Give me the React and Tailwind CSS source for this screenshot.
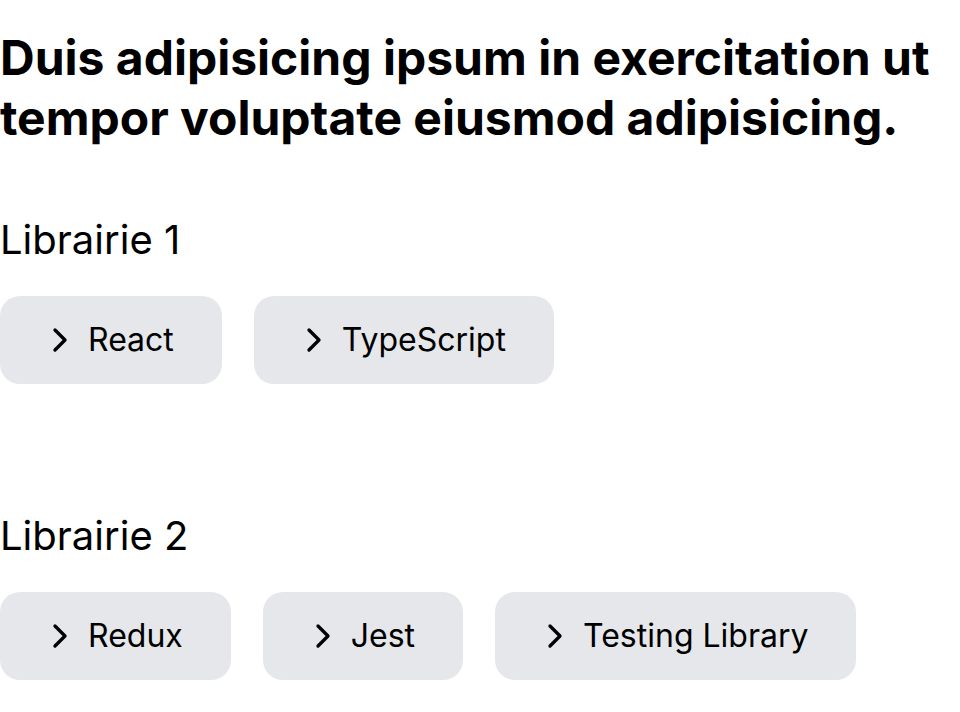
import React from 'react';
import { ChevronRight } from 'lucide-react';

const sections = [
  { title: 'Librairie 1', items: ['React', 'TypeScript'], spacing: 'mt-[64px]' },
  { title: 'Librairie 2', items: ['Redux', 'Jest', 'Testing Library'], spacing: 'mt-[124px]' },
];

const LibButton = ({ label }) => (
  <button className="flex h-[88px] items-center gap-2 rounded-[20px] bg-[#e5e7eb] pl-10 pr-12 text-[32px] text-black">
    <ChevronRight size={40} strokeWidth={2} />
    <span>{label}</span>
  </button>
);

const App = () => {
  return (
    <div className="min-h-screen bg-white font-['Inter',sans-serif] text-black">
      <h1 className="pt-[28px] text-[48px] font-bold leading-[60px]">
        Duis adipisicing ipsum in exercitation ut tempor voluptate eiusmod adipisicing.
      </h1>
      {sections.map((section) => (
        <section key={section.title} className={section.spacing}>
          <h2 className="text-[40px] leading-[56px]">{section.title}</h2>
          <div className="mt-[28px] flex gap-8">
            {section.items.map((item) => (
              <LibButton key={item} label={item} />
            ))}
          </div>
        </section>
      ))}
    </div>
  );
};

export default App;
